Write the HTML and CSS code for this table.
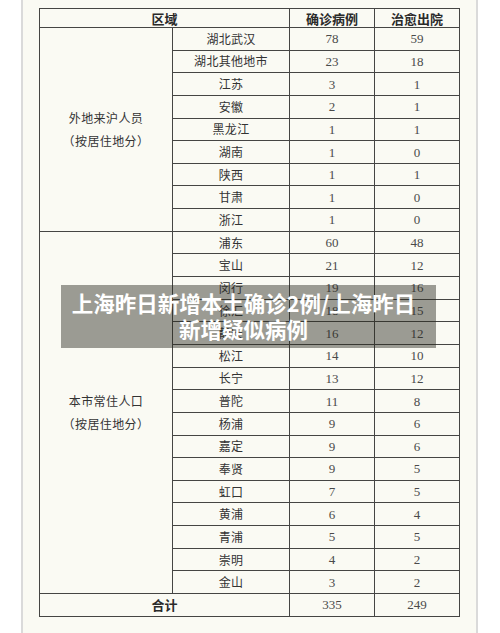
FILE: index.html
```html
<!DOCTYPE html>
<html lang="zh-CN">
<head>
<meta charset="utf-8">
<title>上海昨日新增本土确诊2例</title>
<link rel="stylesheet" href="styles.css">
</head>
<body>
<div class="paper">
  <div class="grid">
    <div class="cell head span2">区域</div>
    <div class="cell head">确诊病例</div>
    <div class="cell head">治愈出院</div>

    <div class="cell group g1"><span>外地来沪人员</span><span>（按居住地分）</span></div>
    <div class="cell name">湖北武汉</div><div class="cell num">78</div><div class="cell num">59</div>
    <div class="cell name">湖北其他地市</div><div class="cell num">23</div><div class="cell num">18</div>
    <div class="cell name">江苏</div><div class="cell num">3</div><div class="cell num">1</div>
    <div class="cell name">安徽</div><div class="cell num">2</div><div class="cell num">1</div>
    <div class="cell name">黑龙江</div><div class="cell num">1</div><div class="cell num">1</div>
    <div class="cell name">湖南</div><div class="cell num">1</div><div class="cell num">0</div>
    <div class="cell name">陕西</div><div class="cell num">1</div><div class="cell num">1</div>
    <div class="cell name">甘肃</div><div class="cell num">1</div><div class="cell num">0</div>
    <div class="cell name">浙江</div><div class="cell num">1</div><div class="cell num">0</div>

    <div class="cell group g2"><span>本市常住人口</span><span>（按居住地分）</span></div>
    <div class="cell name">浦东</div><div class="cell num">60</div><div class="cell num">48</div>
    <div class="cell name">宝山</div><div class="cell num">21</div><div class="cell num">12</div>
    <div class="cell name">闵行</div><div class="cell num">19</div><div class="cell num">16</div>
    <div class="cell name">徐汇</div><div class="cell num">18</div><div class="cell num">15</div>
    <div class="cell name">静安</div><div class="cell num">16</div><div class="cell num">12</div>
    <div class="cell name">松江</div><div class="cell num">14</div><div class="cell num">10</div>
    <div class="cell name">长宁</div><div class="cell num">13</div><div class="cell num">12</div>
    <div class="cell name">普陀</div><div class="cell num">11</div><div class="cell num">8</div>
    <div class="cell name">杨浦</div><div class="cell num">9</div><div class="cell num">6</div>
    <div class="cell name">嘉定</div><div class="cell num">9</div><div class="cell num">6</div>
    <div class="cell name">奉贤</div><div class="cell num">9</div><div class="cell num">5</div>
    <div class="cell name">虹口</div><div class="cell num">7</div><div class="cell num">5</div>
    <div class="cell name">黄浦</div><div class="cell num">6</div><div class="cell num">4</div>
    <div class="cell name">青浦</div><div class="cell num">5</div><div class="cell num">5</div>
    <div class="cell name">崇明</div><div class="cell num">4</div><div class="cell num">2</div>
    <div class="cell name">金山</div><div class="cell num">3</div><div class="cell num">2</div>

    <div class="cell head span2">合计</div>
    <div class="cell num">335</div>
    <div class="cell num">249</div>
  </div>
</div>
<div class="banner">上海昨日新增本土确诊2例/上海昨日新增疑似病例</div>
</body>
</html>
```

FILE: styles.css
```css
html, body {
  margin: 0;
  padding: 0;
  background: #ffffff;
}

body {
  width: 500px;
  height: 633px;
  overflow: hidden;
  position: relative;
  font-family: "Noto Sans CJK SC", "Noto Sans", sans-serif;
}

.paper {
  margin-left: 21px;
  width: 457px;
  height: 633px;
  box-sizing: border-box;
  border-left: 2px solid #dadada;
  border-right: 2px solid #dadada;
  background: #fafaf3;
  padding-top: 8px;
}

.grid {
  margin-left: 16px;
  display: grid;
  grid-template-columns: 132px 116px 84px 84px;
  grid-template-rows: 18px repeat(25, 21.65px) 21.75px;
  gap: 1px;
  padding: 1px;
  width: max-content;
  background: #454543;
}

.cell {
  background: #fafaf3;
  display: flex;
  align-items: center;
  justify-content: center;
  color: #333333;
  font-size: 12px;
  line-height: 1;
}

.span2 {
  grid-column: span 2;
}

.head {
  font-weight: 700;
  font-size: 13px;
  color: #2a2a2a;
}

.name {
  letter-spacing: 0.3px;
}

.num {
  font-family: "Liberation Serif", serif;
  font-size: 13px;
  color: #4a4a4a;
}

.group {
  flex-direction: column;
  line-height: 23px;
  letter-spacing: 0.4px;
}

.g1 {
  grid-row: span 9;
}

.g2 {
  grid-row: span 16;
}

.banner {
  position: absolute;
  left: 61px;
  top: 285px;
  width: 375px;
  height: 63px;
  box-sizing: border-box;
  padding: 5px 14px 0 4px;
  background: rgba(40, 40, 30, 0.45);
  color: #ffffff;
  font-weight: 700;
  font-size: 21.5px;
  line-height: 26px;
  text-align: center;
}
```
